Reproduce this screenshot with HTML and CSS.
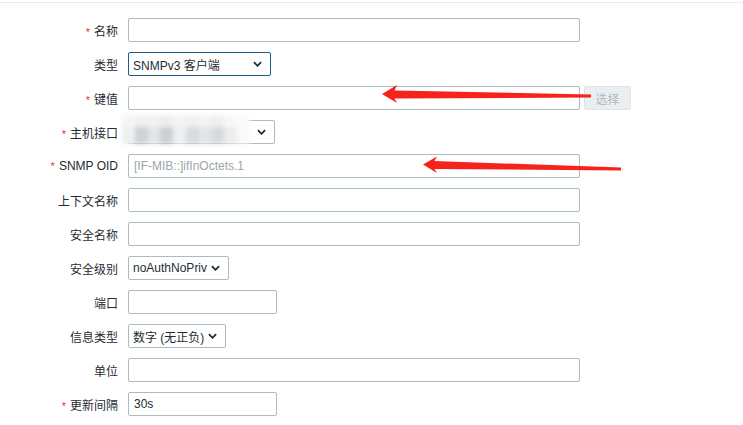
FILE: index.html
```html
<!DOCTYPE html>
<html lang="zh-CN">
<head>
  <meta charset="UTF-8">
  <title>监控项</title>
  <link rel="stylesheet" href="styles.css">
</head>
<body>
  <div class="top-line"></div>
  <form class="item-form">
    <label class="form-label"><span class="asterisk">*</span>名称</label>
    <div class="field"><input class="text wide" type="text"></div>

    <label class="form-label">类型</label>
    <div class="field">
      <div class="select focused w-type"><span>SNMPv3 客户端</span><svg class="chev" viewBox="0 0 10 6"><path d="M1 1l4 4 4-4"/></svg></div>
    </div>

    <label class="form-label"><span class="asterisk">*</span>键值</label>
    <div class="field">
      <input class="text wide" type="text">
      <button type="button" class="btn-alt" disabled>选择</button>
    </div>

    <label class="form-label"><span class="asterisk">*</span>主机接口</label>
    <div class="field">
      <div class="masked">
        <div class="select w-host"><span></span><svg class="chev" viewBox="0 0 10 6"><path d="M1 1l4 4 4-4"/></svg></div>
        <div class="mosaic">
          <i style="background:#f4f5f6"></i><i style="background:#eef0f1"></i><i style="background:#f1f2f3"></i><i style="background:#ecedef"></i><i style="background:#f3f4f4"></i><i style="background:#eff0f1"></i><i style="background:#f2f3f4"></i><i style="background:#eeeff0"></i><i style="background:#f6f7f7"></i><i style="background:#fafbfb"></i>
          <i style="background:#eeeff0"></i><i style="background:#cfd1d5"></i><i style="background:#e4e5e7"></i><i style="background:#cdd0d4"></i><i style="background:#eeeff0"></i><i style="background:#dadbde"></i><i style="background:#e3e4e6"></i><i style="background:#d8d9db"></i><i style="background:#ededed"></i><i style="background:#f8f9fa"></i>
        </div>
      </div>
    </div>

    <label class="form-label"><span class="asterisk">*</span>SNMP OID</label>
    <div class="field"><input class="text wide" type="text" placeholder="[IF-MIB::]ifInOctets.1"></div>

    <label class="form-label">上下文名称</label>
    <div class="field"><input class="text wide" type="text"></div>

    <label class="form-label">安全名称</label>
    <div class="field"><input class="text wide" type="text"></div>

    <label class="form-label">安全级别</label>
    <div class="field">
      <div class="select w-level"><span>noAuthNoPriv</span><svg class="chev" viewBox="0 0 10 6"><path d="M1 1l4 4 4-4"/></svg></div>
    </div>

    <label class="form-label">端口</label>
    <div class="field"><input class="text short" type="text"></div>

    <label class="form-label">信息类型</label>
    <div class="field">
      <div class="select w-info"><span>数字 (无正负)</span><svg class="chev" viewBox="0 0 10 6"><path d="M1 1l4 4 4-4"/></svg></div>
    </div>

    <label class="form-label">单位</label>
    <div class="field"><input class="text wide" type="text"></div>

    <label class="form-label"><span class="asterisk">*</span>更新间隔</label>
    <div class="field"><input class="text short" type="text" value="30s"></div>
  </form>

  <!-- annotation arrows drawn over the form -->
  <svg class="marks" width="743" height="425" viewBox="0 0 743 425">
    <polygon points="382,94 397,85 394.5,90.5 591,94.5 591,97.5 394.5,98.5 397,103"/>
    <polygon points="423,164.5 437,156.5 434.5,161 621,167.5 621,170.5 434.5,169 437,173"/>
  </svg>
</body>
</html>
```

FILE: styles.css
```css
body {
  margin: 0;
  font-family: "Liberation Sans", Arial, "Noto Sans CJK SC", sans-serif;
  font-size: 12px;
  color: #1f2c33;
  background: #fff;
  position: relative;
}
.top-line {
  height: 2px;
  border-bottom: 1px solid #ebebeb;
}
.item-form {
  display: grid;
  grid-template-columns: 118px 1fr;
  grid-auto-rows: 24px;
  column-gap: 10px;
  row-gap: 10px;
  align-items: center;
  padding-top: 15px;
}
.form-label {
  text-align: right;
  white-space: nowrap;
}
.asterisk {
  color: #e33734;
  margin-right: 4px;
  font-size: 11px;
}
.field {
  display: flex;
  align-items: center;
  gap: 4px;
  height: 24px;
}
.text {
  box-sizing: border-box;
  height: 24px;
  border: 1px solid #acbbc2;
  border-radius: 2px;
  padding: 0 5px;
  font: inherit;
  color: #1f2c33;
  background: #fff;
  margin: 0;
}
.text::placeholder { color: #9aa5ab; }
.wide { width: 452px; }
.short { width: 149px; }
.btn-alt {
  box-sizing: border-box;
  width: 47px;
  height: 24px;
  margin: 0;
  font: inherit;
  color: #acbbc2;
  background: #ebeef0;
  border: 1px solid #dfe4e7;
  border-radius: 2px;
}
.select {
  box-sizing: border-box;
  height: 24px;
  display: flex;
  align-items: center;
  justify-content: space-between;
  padding: 0 8px 0 4px;
  border: 1px solid #acbbc2;
  border-radius: 2px;
  background: #fff;
  white-space: nowrap;
}
.select.focused { border-color: #1e5c87; }
.chev {
  width: 9px;
  height: 6px;
  fill: none;
  stroke: #1f2c33;
  stroke-width: 2;
}
.w-type { width: 143px; }
.w-host { width: 147px; }
.w-level { width: 101px; }
.w-info { width: 98px; }
.masked { position: relative; }
.mosaic {
  position: absolute;
  left: -6px;
  top: -5px;
  width: 128px;
  height: 29px;
  display: grid;
  grid-template-columns: repeat(10, 1fr);
  grid-template-rows: 12px 17px;
  filter: blur(2px);
}
.marks {
  position: absolute;
  left: 0;
  top: 0;
  pointer-events: none;
}
.marks polygon { fill: #f5231b; }
```
